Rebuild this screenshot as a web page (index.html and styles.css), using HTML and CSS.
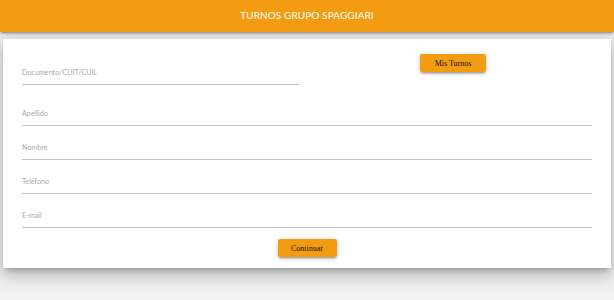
FILE: index.html
```html
<!DOCTYPE html>
<html lang="es">
<head>
<meta charset="utf-8">
<title>Turnos Grupo Spaggiari</title>
<link rel="stylesheet" href="styles.css">
</head>
<body>
<header class="topbar">
  <h1 class="topbar-title">TURNOS GRUPO SPAGGIARI</h1>
</header>
<main class="card">
  <div class="top-row">
    <div class="field field-doc">
      <label class="field-label">Documento/CUIT/CUIL</label>
    </div>
    <button class="btn btn-mis" type="button">Mis Turnos</button>
  </div>
  <div class="fields">
    <div class="field"><label class="field-label">Apellido</label></div>
    <div class="field"><label class="field-label">Nombre</label></div>
    <div class="field"><label class="field-label">Teléfono</label></div>
    <div class="field"><label class="field-label">E-mail</label></div>
  </div>
  <div class="actions">
    <button class="btn btn-continue" type="button">Continuar</button>
  </div>
</main>
</body>
</html>
```
FILE: styles.css
```css
* { box-sizing: border-box; }
html, body { margin: 0; padding: 0; }
body {
  background: #f2f2f2;
  font-family: Lato, "Open Sans", sans-serif;
  height: 300px;
  overflow: hidden;
}
.topbar {
  height: 32px;
  background: #f39c12;
  display: flex;
  align-items: center;
  justify-content: center;
  padding-bottom: 3px;
  box-shadow: 0 2px 2px 0 rgba(0,0,0,.14), 0 3px 1px -2px rgba(0,0,0,.12), 0 1px 5px 0 rgba(0,0,0,.2);
  position: relative;
  z-index: 1;
}
.topbar-title {
  margin: 0;
  color: #fff;
  font-family: Lato, "Open Sans", sans-serif;
  font-weight: 400;
  font-size: 10px;
  letter-spacing: 0.1px;
}
.card {
  margin: 7px 3px 0;
  background: #fff;
  height: 229px;
  padding: 15px 19px 12px;
  box-shadow: 0 8px 17px 2px rgba(0,0,0,.14), 0 3px 14px 2px rgba(0,0,0,.12), 0 5px 5px -3px rgba(0,0,0,.2);
}
.top-row {
  display: flex;
  align-items: flex-start;
}
.field {
  border-bottom: 1px solid #c2c2c2;
  padding-bottom: 6px;
}
.field-doc {
  width: 277px;
  margin-top: 14px;
}
.field-label {
  display: block;
  height: 10px;
  line-height: 10px;
  font-size: 7.2px;
  color: #aaaaaa;
}
.btn {
  border: none;
  background: #f39c12;
  color: #111;
  font-family: "Liberation Serif", "Times New Roman", serif;
  font-size: 8px;
  height: 18px;
  padding: 0;
  border-radius: 2px;
  box-shadow: 0 2px 2px 0 rgba(0,0,0,.14), 0 3px 1px -2px rgba(0,0,0,.12), 0 1px 5px 0 rgba(0,0,0,.2);
}
.btn-mis {
  width: 66px;
  margin-left: 121px;
}
.fields {
  margin-top: 24px;
  display: flex;
  flex-direction: column;
  gap: 17px;
}
.actions {
  margin-top: 11px;
  display: flex;
  justify-content: center;
}
.btn-continue {
  width: 59px;
}
```
